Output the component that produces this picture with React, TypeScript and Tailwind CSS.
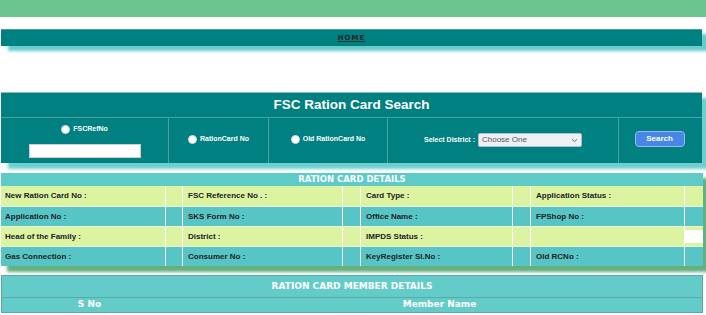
import React from "react";

const Radio = () => (
  <span className="inline-block w-[9px] h-[9px] rounded-full bg-white border border-[#d8d8d8] align-middle mr-[3px]" />
);

const rows: [string, string, string, string][] = [
  ["New Ration Card No :", "FSC Reference No . :", "Card Type :", "Application Status :"],
  ["Application No :", "SKS Form No :", "Office Name :", "FPShop No :"],
  ["Head of the Family :", "District :", "IMPDS Status :", ""],
  ["Gas Connection :", "Consumer No :", "KeyRegister Sl.No :", "Old RCNo :"],
];

export default function App() {
  return (
    <div className="w-[706px] h-[315px] bg-white overflow-hidden" style={{ fontFamily: "'Liberation Sans', Arial, sans-serif" }}>
      <div className="h-[17px] bg-[#6cc58f]" />
      <div className="mt-[12px] ml-[1px] w-[701px] h-[17px] bg-[#008080] border-t border-[#3f9f9f] shadow-[7px_5px_3px_#66cccc] flex items-center justify-center">
        <span className="text-[7px] font-bold underline tracking-[1px] text-[#1d2b2b]" style={{ fontFamily: "'DejaVu Sans', Verdana, sans-serif" }}>HOME</span>
      </div>

      <div className="mt-[46px] ml-[1px] w-[701px] bg-[#008080] border-t border-[#8fbdbd] shadow-[7px_6px_3px_#6fcfcf]">
        <div className="h-[25px] flex items-center justify-center border-b border-[#4aa3a3]">
          <span className="text-[13.5px] font-bold text-white">FSC Ration Card Search</span>
        </div>
        <div className="h-[45px] grid grid-cols-[168px_100px_119px_231px_1fr] text-white text-[7px] font-bold">
          <div className="border-r border-[#4aa3a3] flex flex-col items-center pt-[6px]">
            <div className="flex items-center"><Radio /><span>FSCRefNo</span></div>
            <div className="mt-[9px] w-[112px] h-[14px] bg-white border border-[#cfcfcf]" />
          </div>
          <div className="border-r border-[#4aa3a3] flex items-center justify-center pb-[3px]">
            <Radio /><span>RationCard No</span>
          </div>
          <div className="border-r border-[#4aa3a3] flex items-center justify-center pb-[3px]">
            <Radio /><span>Old RationCard No</span>
          </div>
          <div className="border-r border-[#4aa3a3] flex items-center justify-center pb-[1px]">
            <span className="mr-[3px]">Select District :</span>
            <div className="w-[104px] h-[14px] bg-[#eef0f6] border border-[#b9bcc6] rounded-[2px] flex items-center justify-between px-[3px]">
              <span className="text-[8px] font-normal text-[#555]">Choose One</span>
              <svg width="7" height="5" viewBox="0 0 7 5"><path d="M1 1.2 L3.5 3.6 L6 1.2" fill="none" stroke="#666" strokeWidth="0.9" /></svg>
            </div>
          </div>
          <div className="flex items-center justify-center pb-[3px] pr-[2px]">
            <div className="w-[50px] h-[16px] rounded-[4px] bg-[#4785e6] border border-[#9ab8e8] flex items-center justify-center text-[8px]">Search</div>
          </div>
        </div>
      </div>

      <div className="mt-[9px] ml-[1px] w-[702px] border-t border-white shadow-[6px_6px_3px_#64b17f]">
        <div className="h-[13px] bg-[#5ecbc9] flex items-center justify-center text-white font-bold text-[8.5px]" style={{ fontFamily: "'DejaVu Sans', Verdana, sans-serif" }}>
          RATION CARD DETAILS
        </div>
        {rows.map((r, i) => (
          <div key={i} className={`grid grid-cols-[165px_17px_160px_18px_152px_18px_154px_1fr] h-[20px] text-[8px] font-bold text-[#222] ${i % 2 === 0 ? "bg-[#dcf3a1]" : "bg-[#57c5c5]"} ${i > 0 ? "border-t border-[#e9f7d9]" : ""}`}>
            <div className="border-r border-white flex items-center pl-[4px]">{r[0]}</div>
            <div className="border-r border-white" />
            <div className="border-r border-white flex items-center pl-[5px]">{r[1]}</div>
            <div className="border-r border-white" />
            <div className="border-r border-white flex items-center pl-[5px]">{r[2]}</div>
            <div className="border-r border-white" />
            <div className="border-r border-white flex items-center pl-[5px]">{r[3]}</div>
            <div className={i === 2 ? "bg-white my-[3px]" : ""} />
          </div>
        ))}
      </div>

      <div className="mt-[9px] ml-[1px] w-[702px] border border-[#5aa8a8] bg-[#63cbc8] text-white font-bold" style={{ fontFamily: "'DejaVu Sans', Verdana, sans-serif" }}>
        <div className="h-[22px] flex items-center justify-center text-[9px] border-b border-[#5aa8a8]">RATION CARD MEMBER DETAILS</div>
        <div className="h-[14px] grid grid-cols-[175px_1fr] text-[9px]">
          <div className="flex items-center justify-center">S No</div>
          <div className="flex items-center justify-center">Member Name</div>
        </div>
      </div>
    </div>
  );
}
